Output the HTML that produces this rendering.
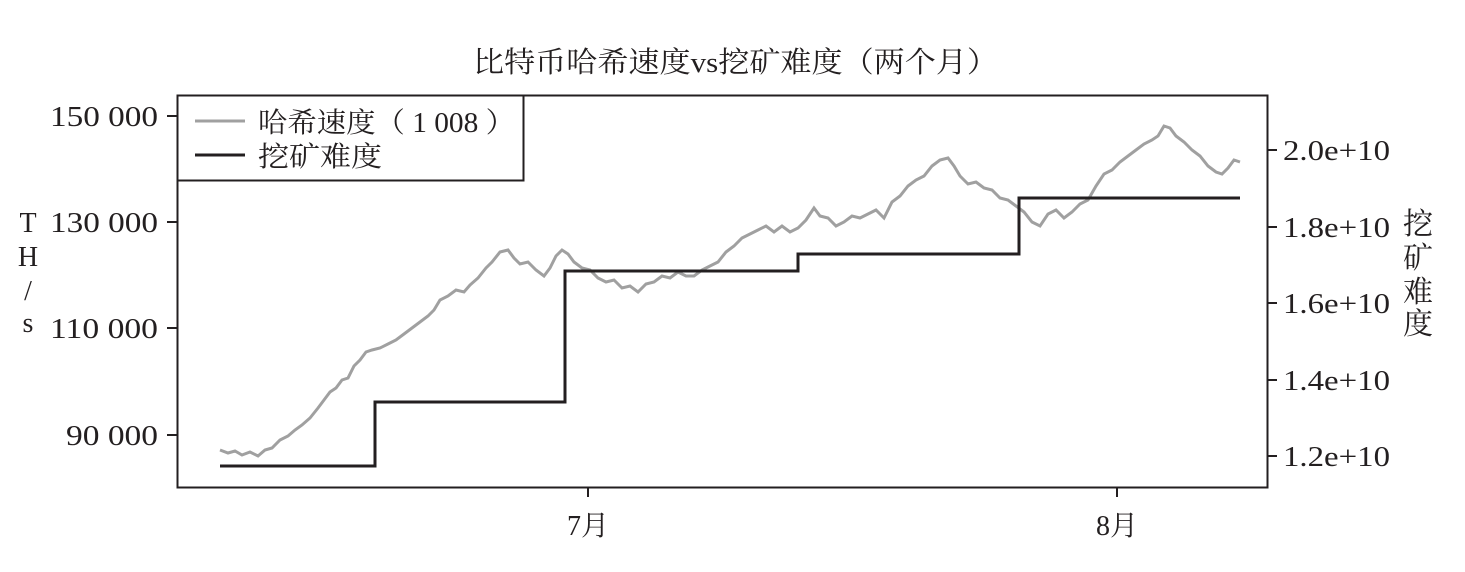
<!DOCTYPE html>
<html><head><meta charset="utf-8"><style>
html,body{margin:0;padding:0;background:#fff;width:1465px;height:572px;overflow:hidden}
svg text{font-family:"Liberation Serif","Noto Serif CJK SC",serif;fill:#231f20}
</style></head><body>
<svg width="1465" height="572" viewBox="0 0 1465 572" xmlns="http://www.w3.org/2000/svg">
<text x="473" y="72" font-size="29" textLength="525" lengthAdjust="spacingAndGlyphs">比特币哈希速度vs挖矿难度（两个月）</text>
<rect x="177.5" y="95.5" width="1090" height="392" fill="none" stroke="#231f20" stroke-width="2"/>
<g stroke="#231f20" stroke-width="2">
<line x1="167" y1="116" x2="177" y2="116"/><line x1="167" y1="222" x2="177" y2="222"/>
<line x1="167" y1="328" x2="177" y2="328"/><line x1="167" y1="435" x2="177" y2="435"/>
<line x1="1267" y1="150" x2="1277" y2="150"/><line x1="1267" y1="227" x2="1277" y2="227"/>
<line x1="1267" y1="303" x2="1277" y2="303"/><line x1="1267" y1="380" x2="1277" y2="380"/>
<line x1="1267" y1="456" x2="1277" y2="456"/>
<line x1="588" y1="487" x2="588" y2="497"/><line x1="1117" y1="487" x2="1117" y2="497"/>
</g>
<g font-size="28">
<text x="50" y="126" textLength="108" lengthAdjust="spacingAndGlyphs">150 000</text><text x="50" y="232" textLength="108" lengthAdjust="spacingAndGlyphs">130 000</text>
<text x="50" y="338" textLength="108" lengthAdjust="spacingAndGlyphs">110 000</text><text x="66" y="445" textLength="92" lengthAdjust="spacingAndGlyphs">90 000</text>
</g>
<g font-size="28">
<text x="1283" y="160" textLength="107" lengthAdjust="spacingAndGlyphs">2.0e+10</text><text x="1283" y="237" textLength="107" lengthAdjust="spacingAndGlyphs">1.8e+10</text>
<text x="1283" y="313" textLength="107" lengthAdjust="spacingAndGlyphs">1.6e+10</text><text x="1283" y="390" textLength="107" lengthAdjust="spacingAndGlyphs">1.4e+10</text>
<text x="1283" y="466" textLength="107" lengthAdjust="spacingAndGlyphs">1.2e+10</text>
</g>
<g font-size="28" text-anchor="middle">
<text x="588" y="535">7月</text><text x="1117" y="535">8月</text>
<text x="28" y="232">T</text><text x="28" y="266">H</text><text x="28" y="300">/</text><text x="28" y="332">s</text>
</g>
<g font-size="30" text-anchor="middle">
<text x="1418" y="234">挖</text><text x="1418" y="268">矿</text><text x="1418" y="302">难</text><text x="1418" y="334">度</text>
</g>
<polyline fill="none" stroke="#a0a0a0" stroke-width="3" points="220,450 228,453 235,451 242,455 250,452 258,456 265,450 272,448 280,440 288,436 295,430 302,425 310,418 318,408 324,400 330,392 336,388 342,380 348,378 354,366 360,360 366,352 372,350 380,348 388,344 396,340 404,334 412,328 420,322 428,316 434,310 440,300 448,296 456,290 464,292 470,285 478,278 486,268 492,262 500,252 508,250 514,258 520,264 528,262 536,270 544,276 550,268 556,256 562,250 568,254 574,262 582,268 590,270 598,278 606,282 614,280 622,288 630,286 638,292 646,284 654,282 662,276 670,278 678,272 686,276 694,276 702,270 710,266 718,262 726,252 734,246 742,238 750,234 758,230 766,226 774,232 782,226 790,232 798,228 806,220 814,208 820,216 828,218 836,226 844,222 852,216 860,218 868,214 876,210 884,218 892,202 900,196 908,186 916,180 924,176 932,166 940,160 948,158 954,166 960,176 968,184 976,182 984,188 992,190 1000,198 1008,200 1016,206 1024,212 1032,222 1040,226 1048,214 1056,210 1064,218 1072,212 1080,204 1088,200 1096,186 1104,174 1112,170 1120,162 1128,156 1136,150 1144,144 1152,140 1158,136 1164,126 1170,128 1176,136 1184,142 1192,150 1200,156 1208,166 1216,172 1222,174 1228,168 1234,160 1240,162"/>
<polyline fill="none" stroke="#231f20" stroke-width="3" points="220,466 375,466 375,402 565,402 565,271 798,271 798,254 1019,254 1019,198 1240,198"/>
<rect x="177.5" y="95.5" width="346" height="85" fill="#fff" stroke="#231f20" stroke-width="2"/>
<line x1="195" y1="121" x2="245" y2="121" stroke="#a0a0a0" stroke-width="3"/>
<line x1="195" y1="155" x2="245" y2="155" stroke="#231f20" stroke-width="3"/>
<text x="258" y="132" font-size="28" textLength="257" lengthAdjust="spacingAndGlyphs">哈希速度（ 1 008 ）</text>
<text x="258" y="166" font-size="28" textLength="124" lengthAdjust="spacingAndGlyphs">挖矿难度</text>
</svg>
</body></html>
